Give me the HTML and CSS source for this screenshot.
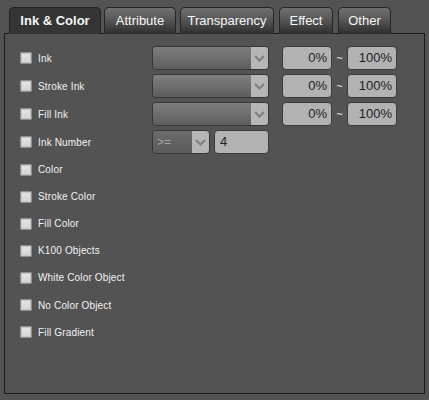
FILE: index.html
```html
<!DOCTYPE html>
<html>
<head>
<meta charset="utf-8">
<link rel="stylesheet" href="styles.css">
</head>
<body>
<div class="window">
  <div class="tabs">
    <div class="tab active">Ink &amp; Color</div>
    <div class="tab w-attr">Attribute</div>
    <div class="tab w-trans">Transparency</div>
    <div class="tab w-effect">Effect</div>
    <div class="tab w-other">Other</div>
  </div>
  <div class="panel">
    <div class="grid">
      <label class="check"><span class="box"></span>Ink</label>
      <div class="select"><span class="sel-body"></span><span class="arrow"><svg width="11" height="7" viewBox="0 0 11 7"><path d="M1 1 L5.5 5.5 L10 1" fill="none" stroke="#7d7d7d" stroke-width="2"/></svg></span></div>
      <div class="field num">0%</div><span class="tilde">~</span><div class="field num">100%</div>

      <label class="check"><span class="box"></span>Stroke Ink</label>
      <div class="select"><span class="sel-body"></span><span class="arrow"><svg width="11" height="7" viewBox="0 0 11 7"><path d="M1 1 L5.5 5.5 L10 1" fill="none" stroke="#7d7d7d" stroke-width="2"/></svg></span></div>
      <div class="field num">0%</div><span class="tilde">~</span><div class="field num">100%</div>

      <label class="check"><span class="box"></span>Fill Ink</label>
      <div class="select"><span class="sel-body"></span><span class="arrow"><svg width="11" height="7" viewBox="0 0 11 7"><path d="M1 1 L5.5 5.5 L10 1" fill="none" stroke="#7d7d7d" stroke-width="2"/></svg></span></div>
      <div class="field num">0%</div><span class="tilde">~</span><div class="field num">100%</div>

      <label class="check"><span class="box"></span>Ink Number</label>
      <div class="numrow">
        <div class="select small"><span class="sel-body op">&gt;=</span><span class="arrow"><svg width="11" height="7" viewBox="0 0 11 7"><path d="M1 1 L5.5 5.5 L10 1" fill="none" stroke="#7d7d7d" stroke-width="2"/></svg></span></div>
        <div class="field val">4</div>
      </div>
      <span class="empty"></span>

      <label class="check full"><span class="box"></span>Color</label>
      <label class="check full"><span class="box"></span>Stroke Color</label>
      <label class="check full"><span class="box"></span>Fill Color</label>
      <label class="check full"><span class="box"></span>K100 Objects</label>
      <label class="check full"><span class="box"></span>White Color Object</label>
      <label class="check full"><span class="box"></span>No Color Object</label>
      <label class="check full"><span class="box"></span>Fill Gradient</label>
    </div>
  </div>
</div>
</body>
</html>
```

FILE: styles.css
```css
html, body {
  margin: 0;
  padding: 0;
  background: #535353;
  width: 429px;
  height: 400px;
  overflow: hidden;
}
.window {
  font-family: "Liberation Sans", Arial, sans-serif;
  color: #f4f4f4;
  padding-top: 7px;
}
.tabs {
  display: flex;
  padding-left: 9px;
  height: 26px;
}
.tab {
  box-sizing: border-box;
  height: 27px;
  border: 1px solid #262626;
  border-bottom: none;
  border-radius: 5px 5px 0 0;
  background: linear-gradient(#707070 0%, #5a5a5a 40%, #2e2e2e 100%);
  font-size: 13px;
  line-height: 25px;
  text-align: center;
  color: #f6f6f6;
  position: relative;
  z-index: 1;
}
.tab.active {
  width: 92px;
  background: #353535;
  font-weight: bold;
  border-color: #222;
}
.w-attr { width: 72px; margin-left: 3px; }
.w-trans { width: 94px; margin-left: 4px; }
.w-effect { width: 54px; margin-left: 5px; }
.w-other { width: 53px; margin-left: 5px; }
.panel {
  box-sizing: border-box;
  margin-left: 4px;
  width: 421px;
  height: 361px;
  border: 1px solid #1c1c1c;
  background: #535353;
  padding: 12px 0 0 15px;
}
.grid {
  display: grid;
  grid-template-columns: 132px 130px 50px 15px 50px;
  grid-template-rows: 24px 24px 24px 24px repeat(7, 23.1px);
  row-gap: 4px;
  align-items: center;
}
.check {
  display: flex;
  align-items: center;
  font-size: 10px;
  color: #f2f2f2;
  letter-spacing: 0.15px;
}
.check.full { grid-column: 1 / -1; }
.box {
  box-sizing: border-box;
  width: 12px;
  height: 12px;
  margin-right: 6px;
  border: 1px solid #8e8e8e;
  border-radius: 1px;
  background: linear-gradient(#e6e6e6, #d4d4d4);
  box-shadow: inset 0 0 0 1px #c6c6c6;
}
.select {
  box-sizing: border-box;
  display: flex;
  width: 117px;
  height: 24px;
  border: 1px solid #363636;
  border-radius: 4px;
  overflow: hidden;
}
.sel-body {
  flex: 1;
  background: linear-gradient(#7f7f7f, #5d5d5d);
}
.arrow {
  width: 17px;
  background: #b6b6b6;
  display: flex;
  align-items: center;
  justify-content: center;
}
.field {
  box-sizing: border-box;
  height: 24px;
  border: 1px solid #3a3a3a;
  border-radius: 4px;
  background: #b2b2b2;
  color: #1e1e1e;
  font-size: 13px;
  line-height: 22px;
}
.num {
  text-align: right;
  padding-right: 4px;
}
.tilde {
  text-align: center;
  font-size: 11px;
  color: #f0f0f0;
}
.numrow {
  display: flex;
  gap: 4px;
  grid-column: 2 / 3;
}
.select.small {
  width: 58px;
}
.op {
  font-size: 12px;
  color: #a6a6a6;
  line-height: 22px;
  padding-left: 4px;
  background: linear-gradient(#6c6c6c, #5a5a5a);
}
.val {
  width: 55px;
  padding-left: 5px;
}
.empty { grid-column: 3 / -1; }
```
